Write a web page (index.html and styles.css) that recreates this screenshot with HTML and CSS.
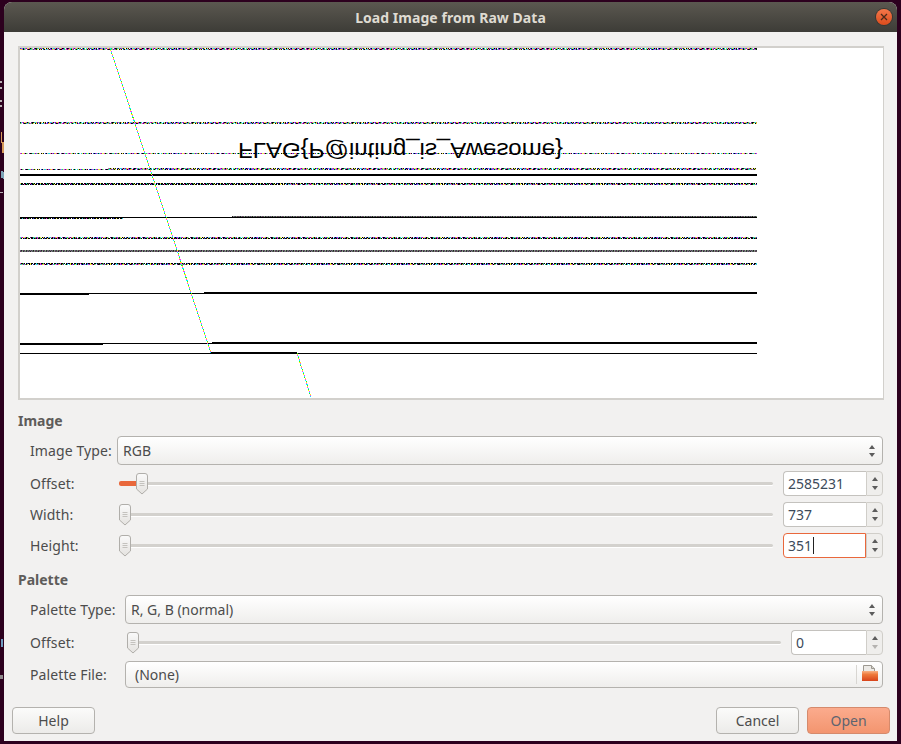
FILE: index.html
```
<!DOCTYPE html>
<html lang="en">
<head>
<meta charset="utf-8">
<title>Load Image from Raw Data</title>
<link rel="stylesheet" href="styles.css">
</head>
<body>
<svg class="defs" width="0" height="0" aria-hidden="true">
  <defs>
    <symbol id="thumb" viewBox="0 0 14 22">
      <path d="M1.500 3a2.500 2.500 0 0 1 2.500-2.500h6A2.500 2.500 0 0 1 12.500 3v13L7 21 1.500 16z" fill="url(#thumbfill)" stroke="#b0aeaa"/>
      <path d="M4.500 8.500h5M4.500 10.500h5M4.500 12.500h5" stroke="#c4c2be" stroke-width="1"/>
    </symbol>
    <linearGradient id="thumbfill" x1="0" y1="0" x2="0" y2="1">
      <stop offset="0" stop-color="#fafafa"/>
      <stop offset="1" stop-color="#e4e2df"/>
    </linearGradient>
    <linearGradient id="folderfill" x1="0" y1="0" x2="0" y2="1">
      <stop offset="0" stop-color="#f8b285"/>
      <stop offset=".35" stop-color="#ee7a3c"/>
      <stop offset="1" stop-color="#d8431a"/>
    </linearGradient>
    <linearGradient id="gc" gradientUnits="userSpaceOnUse" x1="0" y1="0" x2="20" y2="0" spreadMethod="repeat">
      <stop offset=".025" stop-color="#2a3ce0"/><stop offset=".075" stop-color="#e828d8"/>
      <stop offset=".125" stop-color="#35c94a"/><stop offset=".175" stop-color="#181818"/>
      <stop offset=".225" stop-color="#22d5e0"/><stop offset=".275" stop-color="#ffffff"/>
      <stop offset=".325" stop-color="#7a30b0"/><stop offset=".375" stop-color="#f0e840"/>
      <stop offset=".425" stop-color="#181818"/><stop offset=".475" stop-color="#e828d8"/>
      <stop offset=".525" stop-color="#2a3ce0"/><stop offset=".575" stop-color="#35c94a"/>
      <stop offset=".625" stop-color="#c0c0c0"/><stop offset=".675" stop-color="#22d5e0"/>
      <stop offset=".725" stop-color="#601090"/><stop offset=".775" stop-color="#f060a0"/>
      <stop offset=".825" stop-color="#181818"/><stop offset=".875" stop-color="#40d080"/>
      <stop offset=".925" stop-color="#2a3ce0"/><stop offset=".975" stop-color="#e8a030"/>
    </linearGradient>
    <linearGradient id="gd" gradientUnits="userSpaceOnUse" x1="0" y1="0" x2="20" y2="0" spreadMethod="repeat">
      <stop offset=".025" stop-color="#000"/><stop offset=".075" stop-color="#000"/>
      <stop offset=".125" stop-color="#f0e840"/><stop offset=".175" stop-color="#000"/>
      <stop offset=".225" stop-color="#000"/><stop offset=".275" stop-color="#fff"/>
      <stop offset=".325" stop-color="#000"/><stop offset=".375" stop-color="#000"/>
      <stop offset=".425" stop-color="#22d5e0"/><stop offset=".475" stop-color="#000"/>
      <stop offset=".525" stop-color="#303030"/><stop offset=".575" stop-color="#000"/>
      <stop offset=".625" stop-color="#e828d8"/><stop offset=".675" stop-color="#000"/>
      <stop offset=".725" stop-color="#000"/><stop offset=".775" stop-color="#35c94a"/>
      <stop offset=".825" stop-color="#000"/><stop offset=".875" stop-color="#fff"/>
      <stop offset=".925" stop-color="#000"/><stop offset=".975" stop-color="#2a3ce0"/>
    </linearGradient>
    <linearGradient id="gg" gradientUnits="userSpaceOnUse" x1="0" y1="0" x2="20" y2="0" spreadMethod="repeat">
      <stop offset=".025" stop-color="#666"/><stop offset=".075" stop-color="#223"/>
      <stop offset=".125" stop-color="#787"/><stop offset=".175" stop-color="#636"/>
      <stop offset=".225" stop-color="#555"/><stop offset=".275" stop-color="#8a8"/>
      <stop offset=".325" stop-color="#333"/><stop offset=".375" stop-color="#667"/>
      <stop offset=".425" stop-color="#776"/><stop offset=".475" stop-color="#334"/>
      <stop offset=".525" stop-color="#777"/><stop offset=".575" stop-color="#536"/>
      <stop offset=".625" stop-color="#686"/><stop offset=".675" stop-color="#222"/>
      <stop offset=".725" stop-color="#888"/><stop offset=".775" stop-color="#556"/>
      <stop offset=".825" stop-color="#444"/><stop offset=".875" stop-color="#797"/>
      <stop offset=".925" stop-color="#635"/><stop offset=".975" stop-color="#555"/>
    </linearGradient>
    <linearGradient id="go" gradientUnits="userSpaceOnUse" x1="0" y1="0" x2="16" y2="0" spreadMethod="repeat">
      <stop offset=".03125" stop-color="#000" stop-opacity="0"/><stop offset=".09375" stop-color="#fff" stop-opacity="1"/>
      <stop offset=".15625" stop-color="#000" stop-opacity="0"/><stop offset=".21875" stop-color="#000" stop-opacity="1"/>
      <stop offset=".28125" stop-color="#000" stop-opacity="0"/><stop offset=".34375" stop-color="#000" stop-opacity="0"/>
      <stop offset=".40625" stop-color="#22d5e0" stop-opacity="1"/><stop offset=".46875" stop-color="#000" stop-opacity="0"/>
      <stop offset=".53125" stop-color="#000" stop-opacity="0"/><stop offset=".59375" stop-color="#e828d8" stop-opacity="1"/>
      <stop offset=".65625" stop-color="#000" stop-opacity="0"/><stop offset=".71875" stop-color="#000" stop-opacity="0"/>
      <stop offset=".78125" stop-color="#f0e840" stop-opacity="1"/><stop offset=".84375" stop-color="#000" stop-opacity="0"/>
      <stop offset=".90625" stop-color="#000" stop-opacity="1"/><stop offset=".96875" stop-color="#000" stop-opacity="0"/>
    </linearGradient>
    <linearGradient id="gdiag" gradientUnits="userSpaceOnUse" x1="0" y1="0" x2="0" y2="4" spreadMethod="repeat">
      <stop offset=".125" stop-color="#0ff"/><stop offset=".375" stop-color="#3d3"/>
      <stop offset=".625" stop-color="#ff0"/><stop offset=".875" stop-color="#f3f"/>
    </linearGradient>
  </defs>
</svg>

<div class="edge-bits" aria-hidden="true">
  <i class="bit bit-a"></i><i class="bit bit-b"></i><i class="bit bit-c"></i><i class="bit bit-d"></i><i class="bit bit-e"></i><i class="bit bit-f"></i><i class="bit bit-g"></i><i class="bit bit-h"></i><i class="bit bit-i"></i>
</div>

<main class="window">
  <header class="titlebar">
    <h1 class="title">Load Image from Raw Data</h1>
    <span class="close"><svg viewBox="0 0 16 16" width="16" height="16"><path d="M5 5l6 6M11 5l-6 6" stroke="#4a2a1a" stroke-width="1.300" fill="none"/></svg></span>
  </header>

  <div class="content">
    <div class="preview">
      <svg class="raster" viewBox="20 48 862 350" width="862" height="350" shape-rendering="crispEdges">
        <defs>
          <g id="nc"><rect width="800" height="1" fill="url(#gc)"/><rect width="800" height="1" fill="url(#go)"/></g>
          <g id="nd"><rect width="800" height="1" fill="url(#gd)"/></g>
          <g id="ng"><rect width="800" height="1" fill="url(#gg)"/></g>
          <clipPath id="c-all"><rect x="20" width="737" height="400"/></clipPath>
          <clipPath id="c-108"><rect x="108" width="649" height="400"/></clipPath>
          <clipPath id="c-232"><rect x="232" width="525" height="400"/></clipPath>
          <clipPath id="c-280"><rect x="20" width="260" height="400"/></clipPath>
          <clipPath id="c-123"><rect x="20" width="103" height="400"/></clipPath>
        </defs>
        <g clip-path="url(#c-all)">
          <use href="#nc" y="48"/>
          <use href="#nc" x="-7" y="49"/>
          <use href="#nc" x="-3" y="122"/>
          <use href="#nc" x="-11" y="123"/>
          <use href="#nc" x="-5" y="153"/>
          <use href="#nc" x="-9" y="169"/>
          <use href="#nd" x="-2" y="183"/>
          <use href="#nc" x="-4" y="184"/>
          <use href="#nc" x="-4" y="237"/>
          <use href="#nd" x="-15" y="238"/>
          <use href="#ng" y="250"/>
          <use href="#ng" x="-3" y="251"/>
          <use href="#nd" x="-12" y="263"/>
          <use href="#nc" x="-17" y="264"/>
        </g>
        <g clip-path="url(#c-108)"><use href="#nc" x="-13" y="168"/></g>
        <g clip-path="url(#c-280)"><use href="#nd" x="-8" y="184"/></g>
        <g clip-path="url(#c-123)"><use href="#nd" x="-6" y="218"/></g>
        <g clip-path="url(#c-232)"><use href="#ng" x="-1" y="216"/></g>
        <rect x="20" y="174" width="737" height="2" fill="#000"/>
        <rect x="20" y="217" width="737" height="1" fill="#000"/>
        <rect x="20" y="293" width="737" height="1" fill="#000"/>
        <rect x="20" y="294" width="69" height="1" fill="#000"/>
        <rect x="204" y="292" width="553" height="1" fill="#000"/>
        <rect x="20" y="343" width="737" height="1" fill="#000"/>
        <rect x="20" y="344" width="83" height="1" fill="#000"/>
        <rect x="212" y="342" width="545" height="1" fill="#000"/>
        <rect x="20" y="353" width="737" height="1" fill="#000"/>
        <rect x="211" y="352" width="86" height="1" fill="#000"/>
        <path class="diag" d="M110 48 211 353M297 353 311 397"/>
        <text class="flag" transform="translate(238 143) scale(1 -1)" textLength="325" lengthAdjust="spacingAndGlyphs">FLAG{P@inting_is_Awesome}</text>
      </svg>
    </div>

    <section class="group">
      <h2 class="heading">Image</h2>
      <div class="rows">
        <div class="row row-combo">
          <label class="label label-image">Image Type:</label>
          <div class="combo"><span>RGB</span><span class="updown"><i class="up"></i><i class="down"></i></span></div>
        </div>
        <div class="row row-spin">
          <label class="label label-image">Offset:</label>
          <div class="slider"><i class="fill"></i><svg class="thumb thumb-offset"><use href="#thumb"/></svg></div>
          <div class="spin"><span class="value">2585231</span><span class="steps"><i class="up"></i><i class="down"></i></span></div>
        </div>
        <div class="row row-spin">
          <label class="label label-image">Width:</label>
          <div class="slider"><svg class="thumb"><use href="#thumb"/></svg></div>
          <div class="spin"><span class="value">737</span><span class="steps"><i class="up"></i><i class="down"></i></span></div>
        </div>
        <div class="row row-spin">
          <label class="label label-image">Height:</label>
          <div class="slider"><svg class="thumb"><use href="#thumb"/></svg></div>
          <div class="spin focused"><span class="value">351<b class="caret"></b></span><span class="steps"><i class="up"></i><i class="down"></i></span></div>
        </div>
      </div>
    </section>

    <section class="group group-palette">
      <h2 class="heading">Palette</h2>
      <div class="rows">
        <div class="row row-combo">
          <label class="label label-palette">Palette Type:</label>
          <div class="combo"><span>R, G, B (normal)</span><span class="updown"><i class="up"></i><i class="down"></i></span></div>
        </div>
        <div class="row row-spin">
          <label class="label label-palette">Offset:</label>
          <div class="slider"><svg class="thumb"><use href="#thumb"/></svg></div>
          <div class="spin spin-small"><span class="value">0</span><span class="steps"><i class="up"></i><i class="down dim"></i></span></div>
        </div>
        <div class="row row-file">
          <label class="label label-palette">Palette File:</label>
          <div class="combo combo-file">
            <span class="none">(None)</span>
            <span class="file-icon">
              <svg viewBox="0 0 16 16" width="16" height="16">
                <path d="M1.500.5h8l3 3v6h-11z" fill="#eceae6" stroke="#9c9890"/>
                <path d="M9.500.5v3h3" fill="#d4d1ca" stroke="#9c9890"/>
                <path d="M0 6h16v10H0z" fill="url(#folderfill)"/>
              </svg>
            </span>
          </div>
        </div>
      </div>
    </section>

    <footer class="actions">
      <button class="btn" type="button">Help</button>
      <span class="actions-right">
        <button class="btn" type="button">Cancel</button>
        <button class="btn btn-open" type="button">Open</button>
      </span>
    </footer>
  </div>
</main>
</body>
</html>
```
FILE: styles.css
```
* { box-sizing: border-box; }
html, body { margin: 0; height: 100%; }
body {
  position: relative;
  width: 901px;
  height: 744px;
  overflow: hidden;
  background: #2c001e;
  padding: 2px 4px 3px;
  font-family: "Noto Sans", "Open Sans", sans-serif;
  font-size: 14px;
  color: #4c4c4c;
}
.defs { position: absolute; }
.edge-bits { position: absolute; left: 0; top: 0; width: 4px; height: 744px; }
.bit { position: absolute; left: 0; width: 2px; height: 2px; display: block; background: #b9b3b6; }
.bit-a { top: 81px; }
.bit-b { top: 87px; }
.bit-g { top: 100px; }
.bit-h { top: 105px; }
.bit-c { top: 132px; height: 11px; left: 1px; width: 1px; background: #d79a5a; box-shadow: 1px 10px 0 #d79a5a, 2px 10px 0 #d79a5a; }
.bit-d { top: 172px; height: 7px; left: 3px; width: 1px; background: #7ea4b8; box-shadow: -1px -1px 0 #7ea4b8, -2px -1px 0 #7ea4b8; }
.bit-e { top: 639px; height: 8px; left: 1px; width: 2px; background: #6f9cc0; }
.bit-f { top: 675px; height: 4px; width: 3px; background: #8f898c; }
.bit-i { top: 192px; height: 1px; width: 3px; }

.window {
  width: 893px;
  height: 739px;
  background: #f2f1f0;
  border-radius: 8px 8px 0 0;
  overflow: hidden;
  display: flex;
  flex-direction: column;
}
.titlebar {
  flex: none;
  height: 30px;
  display: flex;
  align-items: center;
  justify-content: center;
  position: relative;
  background: linear-gradient(#5b5850, #3d3c37);
}
.title { margin: 0; font-size: 14px; font-weight: 700; letter-spacing: .05px; color: #dfdbd2; }
.close {
  position: absolute;
  right: 5px;
  top: 7px;
  width: 16px;
  height: 16px;
  border-radius: 50%;
  background: linear-gradient(#f4774a, #dc4c1c);
  box-shadow: 0 0 0 1px #3a3732;
  display: flex;
}

.content { flex: 1; display: flex; flex-direction: column; padding: 14px 7px 7px 8px; min-height: 0; }
.preview {
  flex: none;
  width: 866px;
  height: 354px;
  margin-left: 6px;
  border: 2px solid #d2d0cc;
  border-right-width: 1px;
  background: #fff;
  overflow: hidden;
}
.raster { display: block; }
.diag { fill: none; stroke: url(#gdiag); stroke-width: 1; }
.flag { font-family: "Liberation Sans", Arial, sans-serif; font-size: 21.500px; fill: #000; }

.group { margin-left: 6px; }
.group-palette { margin-top: 1px; }
.heading { margin: 0; padding-top: 12px; height: 30px; font-size: 14px; line-height: 18px; font-weight: 700; color: #5e5c5a; }
.rows { display: flex; flex-direction: column; padding-left: 12px; gap: 6px; margin-top: 6px; width: 865px; }
.row { display: flex; align-items: center; }
.row-combo { height: 29px; }
.row-spin { height: 25px; }
.row-file { height: 27px; }
.label { flex: none; line-height: 20px; letter-spacing: .1px; white-space: nowrap; }
.label-image { width: 87px; }
.label-palette { width: 95px; }

.combo {
  flex: 1;
  height: 100%;
  display: flex;
  align-items: center;
  justify-content: space-between;
  padding: 0 6px 0 5px;
  border: 1px solid #b4b2ae;
  border-radius: 4px;
  background: linear-gradient(#fff, #efeeec);
  color: #4c4c4c;
}
.combo-file { padding-right: 0; }
.none { padding-left: 4px; }
.file-icon {
  width: 26px;
  height: 19px;
  margin-top: -1px;
  border-left: 1px solid #d8d6d2;
  display: flex;
  justify-content: center;
}
.updown, .steps { display: flex; flex-direction: column; align-items: center; gap: 4px; }
.updown { margin-right: 1px; }
.up, .down { display: block; width: 0; height: 0; border-left: 3.500px solid transparent; border-right: 3.500px solid transparent; }
.up { border-bottom: 4px solid #5c5c5c; }
.down { border-top: 4px solid #5c5c5c; }
.down.dim { border-top-color: #b5b3b0; }

.slider {
  position: relative;
  flex: 1;
  height: 3px;
  margin: 0 10px 0 2px;
  background: #d3d1cd;
  border-radius: 2px;
  box-shadow: 0 1px 0 #fff;
}
.fill { position: absolute; left: 0; top: -1px; width: 20px; height: 5px; background: #e9683c; border-radius: 2px 0 0 2px; }
.thumb { position: absolute; left: -1px; top: -9px; width: 14px; height: 22px; }
.thumb-offset { left: 16px; }

.spin {
  flex: none;
  width: 100px;
  height: 100%;
  display: flex;
}
.spin-small { width: 92px; }
.value {
  flex: 1;
  padding-left: 4px;
  line-height: 23px;
  color: #3c4a5a;
  background: #fff;
  border: 1px solid #c4c2be;
  border-right: 0;
  border-radius: 4px 0 0 4px;
}
.steps {
  flex: none;
  width: 17px;
  justify-content: center;
  gap: 5px;
  background: #efeeec;
  border: 1px solid #d0cec9;
  border-radius: 0 4px 4px 0;
}
.focused .value { border: 1px solid #e9683c; }
.caret { display: inline-block; width: 1px; height: 17px; margin-left: 1px; vertical-align: -3px; background: #222; }

.actions { display: flex; justify-content: space-between; margin-top: auto; }
.actions-right { display: flex; gap: 8px; }
.btn {
  width: 83px;
  height: 27px;
  padding: 0;
  font: inherit;
  color: #4c4c4c;
  border: 1px solid #b4b2ae;
  border-radius: 4px;
  background: linear-gradient(#fbfbfa, #ecebe9);
}
.btn-open {
  color: #5d6470;
  border-color: #d58a6c;
  background: linear-gradient(#fbab8d, #f3956f);
}
```
